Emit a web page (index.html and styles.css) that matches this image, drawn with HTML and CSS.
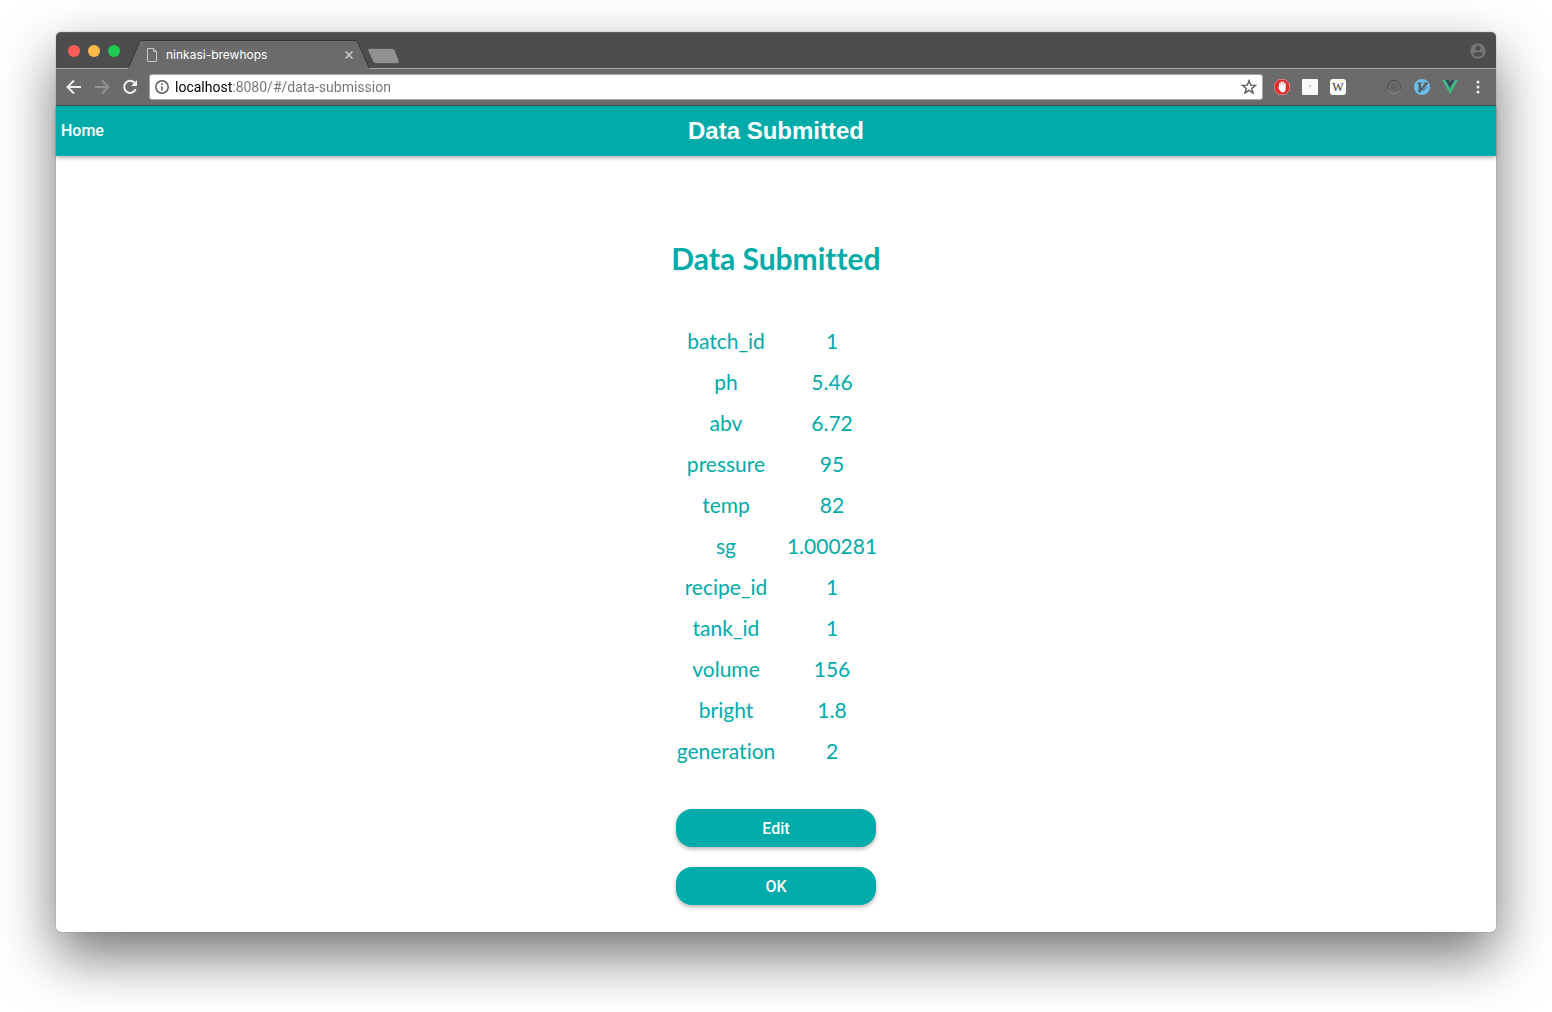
FILE: index.html
```html
<!DOCTYPE html>
<html lang="en">
<head>
<meta charset="utf-8">
<title>ninkasi-brewhops</title>
<link rel="stylesheet" href="styles.css">
</head>
<body>
<div class="window">
  <div class="tabstrip">
    <div class="lights">
      <button class="light red" aria-label="Close window"></button>
      <button class="light yellow" aria-label="Minimize window"></button>
      <button class="light green" aria-label="Zoom window"></button>
    </div>
    <div class="tab">
      <svg class="tab-shape" width="242" height="29" viewBox="0 0 242 29" aria-hidden="true">
        <path d="M0 29L.5 27.500L11.500 2Q12 .5 14 .5H227Q229 .5 229.500 2L241 27.500L242 29Z" fill="#6b6b6b"/>
        <path d="M.5 27.500L11.500 2Q12 .5 14 .5H227Q229 .5 229.500 2L241 27.500" fill="none" stroke="#353535"/>
      </svg>
      <svg class="tab-icon" width="12" height="14" viewBox="0 0 12 14" fill="none" stroke="#c9c9c9" aria-hidden="true"><path d="M1.500 .5H7.500L10.500 3.500V13.500H1.500ZM7.500 .5V3.500H10.500"/></svg>
      <span class="tab-title">ninkasi-brewhops</span>
      <button class="tab-close" aria-label="Close tab"><svg width="8" height="8" viewBox="0 0 8 8" stroke="#cdcdcd" stroke-width="1.500"><path d="M.5 .5L7.500 7.500M7.500 .5L.5 7.500"/></svg></button>
    </div>
    <button class="new-tab" aria-label="New tab"><svg width="33" height="16" viewBox="0 0 33 16"><path d="M2 .5H25Q27 .5 28 2.500L32 13Q32.500 15.500 31 15.500H9Q7 15.500 6 13.500L1 2.500Q.5 .5 2 .5Z" fill="#919191" stroke="#434343" stroke-opacity=".5"/></svg></button>
    <button class="profile" aria-label="Profile"><svg width="16" height="16" viewBox="0 0 16 16"><circle cx="8" cy="8" r="7.700" fill="#757575"/><circle cx="8" cy="5.200" r="2.500" fill="#4d4d4d"/><path d="M3.200 11.300Q4.500 9 8 9T12.800 11.300Q11 13.800 8 13.800T3.200 11.300Z" fill="#4d4d4d"/></svg></button>
  </div>

  <div class="toolbar">
    <div class="nav">
      <button aria-label="Back"><svg width="16" height="16" viewBox="0 0 16 16" fill="none" stroke="#eee" stroke-width="2"><path d="M15 8H2M8 1.500L1.500 8L8 14.500"/></svg></button>
      <button aria-label="Forward"><svg width="16" height="16" viewBox="0 0 16 16" fill="none" stroke="#929292" stroke-width="2"><path d="M1 8H14M8 1.500L14.500 8L8 14.500"/></svg></button>
      <button aria-label="Reload"><svg width="16" height="16" viewBox="0 0 16 16" fill="none" stroke="#eee" stroke-width="2"><path d="M13.700 10.200A6 6 0 1 1 12.500 3.700"/><path d="M15 1V7H9Z" fill="#eee" stroke="none"/></svg></button>
    </div>
    <div class="address">
      <svg width="14" height="14" viewBox="0 0 14 14" fill="none" stroke="#5a5a5a" stroke-width="1.500" aria-hidden="true"><circle cx="7" cy="7" r="6.200"/><path d="M7 6.200V10.500M7 3.300V4.900"/></svg>
      <input class="url" type="text" aria-label="Address" value="localhost:8080/#/data-submission" spellcheck="false">
      <button aria-label="Bookmark"><svg width="16" height="16" viewBox="0 0 16 16" fill="none" stroke="#5a5a5a" stroke-width="1.400"><path d="M8 1.700L9.700 6.100L14.400 6.400L10.800 9.400L12 14L8 11.400L4 14L5.200 9.400L1.600 6.400L6.300 6.100Z"/></svg></button>
    </div>
    <div class="extensions">
      <button aria-label="Ad blocker"><svg width="16" height="16" viewBox="0 0 16 16"><path d="M5 .3H11L15.700 5V11L11 15.700H5L.3 11V5Z" fill="#e12b2b" stroke="#f4b0b0" stroke-width=".7"/><path d="M4 8.500L5 8V4.500Q5.500 3.700 6.100 4.500V7.500L6.500 3Q7.200 2.200 7.900 3V7.200L8.400 2.700Q9.200 2 9.800 2.800V7.500L10.300 4Q11.200 3.300 11.700 4.200V10Q11.300 13.500 8.500 13.500Q6.500 13.300 4 8.500Z" fill="#fff"/></svg></button>
      <button aria-label="Extension menu"><svg width="16" height="16" viewBox="0 0 16 16"><rect width="16" height="16" rx="1" fill="#f8f8f8"/><path d="M6 6H10L8 9Z" fill="#ccc"/></svg></button>
      <button class="w-ext" aria-label="W extension">W</button>
    </div>
    <div class="extensions">
      <button aria-label="Registered extension"><svg width="16" height="16" viewBox="0 0 16 16" fill="none"><circle cx="8" cy="8" r="6.500" stroke="#4d4d4d"/><path d="M2 11A6.800 6.800 0 0 0 14 11" stroke="#909090"/><path d="M6 11V5.500H8.500Q10 5.500 10 7T8.500 8.500H7L10 11" stroke="#505050" stroke-opacity=".6"/></svg></button>
      <button aria-label="Vim extension"><svg width="16" height="16" viewBox="0 0 16 16"><circle cx="8" cy="8" r="8" fill="#6dbfe8"/><path d="M3 3.500H8V4.500H7V9L11 4.500H9.500V3.500H14V4.500L6 13.500H4.500V4.500H3Z" fill="#545b61"/><path d="M9 12L13 7.500" stroke="#545b61"/></svg></button>
      <button aria-label="Vue devtools"><svg width="16" height="16" viewBox="0 0 16 16"><path d="M0 1H3.500L8 9L12.500 1H16L8 15Z" fill="#41b883"/><path d="M3.500 1H6.500L8 3.500L9.500 1H12.500L8 9Z" fill="#35495e"/></svg></button>
      <button aria-label="Browser menu"><svg width="16" height="16" viewBox="0 0 16 16" fill="#eee"><circle cx="8" cy="3" r="1.500"/><circle cx="8" cy="8" r="1.500"/><circle cx="8" cy="13" r="1.500"/></svg></button>
    </div>
  </div>

  <header class="app-bar">
    <a class="home" href="#/">Home</a>
    <h1 class="app-title">Data Submitted</h1>
  </header>

  <main class="content">
    <h2 class="heading">Data Submitted</h2>
    <table class="data">
      <tbody>
        <tr><th scope="row">batch_id</th><td>1</td></tr>
        <tr><th scope="row">ph</th><td>5.46</td></tr>
        <tr><th scope="row">abv</th><td>6.72</td></tr>
        <tr><th scope="row">pressure</th><td>95</td></tr>
        <tr><th scope="row">temp</th><td>82</td></tr>
        <tr><th scope="row">sg</th><td>1.000281</td></tr>
        <tr><th scope="row">recipe_id</th><td>1</td></tr>
        <tr><th scope="row">tank_id</th><td>1</td></tr>
        <tr><th scope="row">volume</th><td>156</td></tr>
        <tr><th scope="row">bright</th><td>1.8</td></tr>
        <tr><th scope="row">generation</th><td>2</td></tr>
      </tbody>
    </table>
    <div class="actions">
      <button class="action">Edit</button>
      <button class="action">OK</button>
    </div>
  </main>
</div>
</body>
</html>
```
FILE: styles.css
```css
* {
  box-sizing: border-box;
}

body {
  margin: 0;
  padding: 32px 56px 80px;
  background: #fff;
  font-family: Roboto, "Liberation Sans", sans-serif;
}

button {
  display: flex;
  align-items: center;
  justify-content: center;
  padding: 0;
  border: 0;
  background: none;
  font-family: inherit;
}

svg {
  display: block;
  flex: none;
}

.window {
  border-radius: 5px;
  background: #fff;
  box-shadow: 0 0 1px rgba(0, 0, 0, 0.6), 0 24px 56px rgba(0, 0, 0, 0.55);
}

.tabstrip {
  display: flex;
  height: 37px;
  padding: 0 10px 0 12px;
  border-top: 1px solid #5e5e5e;
  border-bottom: 1px solid #a3a3a3;
  border-radius: 5px 5px 0 0;
  background: #4d4d4d;
}

.lights {
  display: flex;
  align-items: center;
  gap: 8px;
  margin-right: 8px;
}

.light {
  width: 12px;
  height: 12px;
  border-radius: 50%;
}

.red {
  background: #ff5b57;
}

.yellow {
  background: #ffbb4a;
}

.green {
  background: #1fcb51;
}

.tab {
  position: relative;
  display: flex;
  align-items: center;
  gap: 8px;
  width: 242px;
  height: 29px;
  margin-top: 7px;
  padding: 0 17px 0 18px;
}

.tab-shape {
  position: absolute;
  left: 0;
  top: 0;
}

.tab-icon,
.tab-title,
.tab-close {
  position: relative;
}

.tab-title {
  flex: 1;
  color: #fff;
  font-family: Inter, sans-serif;
  font-size: 12px;
  line-height: 16px;
}

.new-tab {
  align-self: flex-end;
  height: 24px;
  margin-left: -3px;
}

.profile {
  margin-left: auto;
}

.toolbar {
  display: flex;
  align-items: center;
  height: 37px;
  padding: 0 10px;
  border-bottom: 1px solid #4d4d4d;
  background: #6b6b6b;
}

.nav {
  display: flex;
  gap: 12px;
  margin-right: 11px;
}

.address {
  display: flex;
  flex: 1;
  align-items: center;
  gap: 6px;
  height: 26px;
  margin-right: 11px;
  padding: 0 5px;
  border: 1px solid #a8a8a8;
  border-radius: 3px;
  background: #fff;
}

/* The host part of the address is drawn darker than the path. */
.url {
  flex: 1;
  min-width: 0;
  height: 20px;
  padding: 0;
  border: 0;
  outline: 0;
  background: linear-gradient(to right, #000 58px, #737373 58px);
  background-clip: text;
  color: #737373;
  -webkit-text-fill-color: transparent;
  font-family: inherit;
  font-size: 14px;
}

.extensions {
  display: flex;
  gap: 12px;
}

.extensions + .extensions {
  margin-left: 40px;
}

.w-ext {
  width: 16px;
  height: 16px;
  border-radius: 3px;
  background: #fafafa;
  color: #333;
  font-family: "Liberation Serif", serif;
  font-size: 12px;
  line-height: 16px;
}

.app-bar {
  display: grid;
  grid-template-columns: 1fr auto 1fr;
  align-items: center;
  height: 50px;
  padding: 0 5px;
  background: #00aba9;
  box-shadow: 0 2px 4px rgba(0, 0, 0, 0.3);
}

.home {
  justify-self: start;
  color: #fff;
  font-size: 16px;
  font-weight: 500;
  line-height: 20px;
  text-decoration: none;
}

.app-title {
  margin: 0;
  color: #fff;
  font-family: "Liberation Sans", sans-serif;
  font-size: 24px;
  line-height: 32px;
}

.content {
  display: flex;
  flex-direction: column;
  align-items: center;
  padding: 82px 0 27px;
  color: #00aba9;
  font-family: Lato, sans-serif;
  font-variant-ligatures: none;
}

.heading {
  margin: 0 0 42px;
  font-size: 30px;
  line-height: 40px;
}

.data {
  width: 212px;
  border-collapse: collapse;
  table-layout: fixed;
  font-size: 21px;
  line-height: 41px;
  text-align: center;
}

.data th,
.data td {
  padding: 0;
  font-weight: 400;
}

.data th {
  width: 112px;
}

.actions {
  display: flex;
  flex-direction: column;
  gap: 20px;
  margin-top: 38px;
}

.action {
  width: 200px;
  height: 38px;
  border-radius: 16px;
  background: #00aba9;
  box-shadow: 0 2px 4px rgba(0, 0, 0, 0.3);
  color: #fff;
  font-family: Roboto, sans-serif;
  font-size: 16px;
  font-weight: 500;
}
```
